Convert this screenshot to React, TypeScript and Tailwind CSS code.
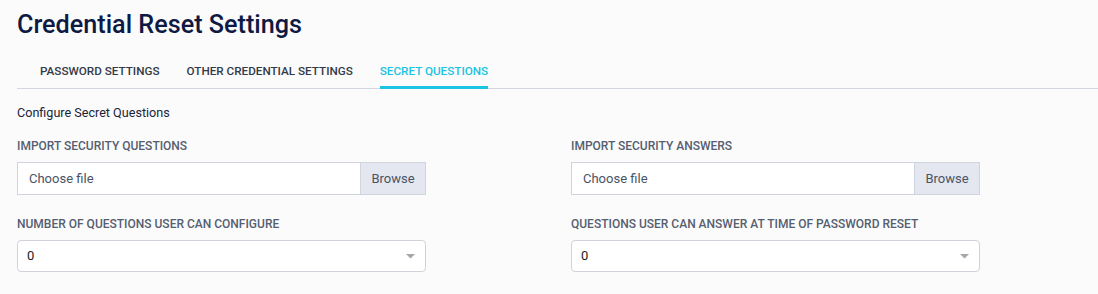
import React from "react";

function FileInput() {
  return (
    <div className="flex h-[33px] w-[409px] border border-[#cfd4de] bg-white">
      <div className="flex flex-1 items-center pl-[11px] text-[13px] text-[#4a5366]">Choose file</div>
      <div className="flex w-[65px] items-center justify-center border-l border-[#cfd4de] bg-[#e4e7ef] text-[13px] text-[#4a5366]">Browse</div>
    </div>
  );
}

function Select() {
  return (
    <div className="relative flex h-[32px] w-[409px] items-center rounded-[4px] border border-[#cfd2d8] bg-white pl-[9px] text-[13px] text-[#222]">
      <span>0</span>
      <svg className="absolute right-[10px] top-[13px]" width="9" height="5" viewBox="0 0 9 5">
        <path d="M0 0 L9 0 L4.5 4.5 Z" fill="#a6a6a6" />
      </svg>
    </div>
  );
}

function Label({ children }: { children: React.ReactNode }) {
  return <div className="text-[12px] font-medium uppercase leading-[16px] text-[#565e70]">{children}</div>;
}

export default function App() {
  return (
    <div className="min-h-[294px] w-[1098px] bg-[#fbfbfb] pl-[17px]" style={{ fontFamily: "Roboto, 'Liberation Sans', sans-serif" }}>
      <h1 className="pt-[9px] text-[25.2px] font-medium leading-[32px] text-[#0e1a44]">Credential Reset Settings</h1>
      <div className="mt-[22px] flex items-start gap-[27px] border-b border-[#d3d7e0] pl-[23px]">
        <div className="text-[11.7px] font-medium leading-[16px] text-[#333a48]">PASSWORD SETTINGS</div>
        <div className="text-[11.7px] font-medium leading-[16px] text-[#333a48]">OTHER CREDENTIAL SETTINGS</div>
        <div className="-mb-px border-b-[3px] border-[#1cc4e4] pb-[7px] text-[11.7px] font-medium leading-[16px] text-[#1cc4e4]">SECRET QUESTIONS</div>
      </div>
      <div className="mt-[15px] text-[12.6px] leading-[18px] text-[#1a2438]">Configure Secret Questions</div>
      <div className="mt-[16px] grid grid-cols-[409px_409px] gap-x-[145px]">
        <div>
          <Label>Import Security Questions</Label>
          <div className="mt-[8px]"><FileInput /></div>
          <div className="mt-[21px]"><Label>Number of questions user can configure</Label></div>
          <div className="mt-[8px]"><Select /></div>
        </div>
        <div>
          <Label>Import Security Answers</Label>
          <div className="mt-[8px]"><FileInput /></div>
          <div className="mt-[21px]"><Label>Questions user can answer at time of password reset</Label></div>
          <div className="mt-[8px]"><Select /></div>
        </div>
      </div>
    </div>
  );
}
